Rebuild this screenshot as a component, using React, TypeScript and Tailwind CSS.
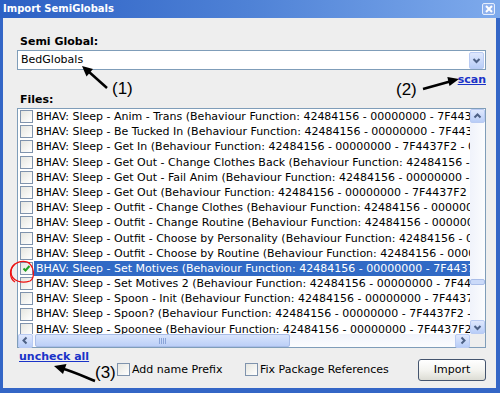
import React from "react";

const rows = [
  "BHAV: Sleep - Anim - Trans (Behaviour Function: 42484156 - 00000000 - 7F4437F2 - 00002001)",
  "BHAV: Sleep - Be Tucked In (Behaviour Function: 42484156 - 00000000 - 7F4437F2 - 00002002)",
  "BHAV: Sleep - Get In (Behaviour Function: 42484156 - 00000000 - 7F4437F2 - 00002003)",
  "BHAV: Sleep - Get Out - Change Clothes Back (Behaviour Function: 42484156 - 00000000 - 7F4437F2)",
  "BHAV: Sleep - Get Out - Fail Anim (Behaviour Function: 42484156 - 00000000 - 7F4437F2)",
  "BHAV: Sleep - Get Out (Behaviour Function: 42484156 - 00000000 - 7F4437F2 - 00002006)",
  "BHAV: Sleep - Outfit - Change Clothes (Behaviour Function: 42484156 - 00000000 - 7F4437F2)",
  "BHAV: Sleep - Outfit - Change Routine (Behaviour Function: 42484156 - 00000000 - 7F4437F2)",
  "BHAV: Sleep - Outfit - Choose by Personality (Behaviour Function: 42484156 - 00000000)",
  "BHAV: Sleep - Outfit - Choose by Routine (Behaviour Function: 42484156 - 00000000)",
  "BHAV: Sleep - Set Motives (Behaviour Function: 42484156 - 00000000 - 7F4437F2 - 0000200B)",
  "BHAV: Sleep - Set Motives 2 (Behaviour Function: 42484156 - 00000000 - 7F4437F2 - 0000200C)",
  "BHAV: Sleep - Spoon - Init (Behaviour Function: 42484156 - 00000000 - 7F4437F2 - 0000200D)",
  "BHAV: Sleep - Spoon? (Behaviour Function: 42484156 - 00000000 - 7F4437F2 - 0000200E)",
  "BHAV: Sleep - Spoonee (Behaviour Function: 42484156 - 00000000 - 7F4437F2 - 0000200F)",
];

const Chevron = ({ dir }: { dir: "up" | "down" | "left" | "right" }) => {
  const d = {
    up: "M2.5 6.5 L5.5 3.5 L8.5 6.5",
    down: "M2.5 4 L5.5 7 L8.5 4",
    left: "M6.5 2.5 L3.5 5.5 L6.5 8.5",
    right: "M4.5 2.5 L7.5 5.5 L4.5 8.5",
  }[dir];
  return (
    <svg width="11" height="11" viewBox="0 0 11 11">
      <path d={d} fill="none" stroke="#4d6185" strokeWidth="2" />
    </svg>
  );
};

const ScrollBtn = ({ dir }: { dir: "up" | "down" | "left" | "right" }) => (
  <div className="w-[15px] h-[14px] flex items-center justify-center rounded-[2px] border border-[#b9cbf3] bg-gradient-to-b from-[#dfe8fd] to-[#b8cdf7]">
    <Chevron dir={dir} />
  </div>
);

const Check = ({ checked }: { checked?: boolean }) => (
  <div className="w-[13px] h-[13px] shrink-0 border border-[#7f93ad] bg-gradient-to-br from-[#e6e6e0] to-white flex items-center justify-center">
    {checked && (
      <svg width="9" height="9" viewBox="0 0 9 9">
        <path d="M1.5 4.5 L3.5 6.5 L7.5 2" fill="none" stroke="#21a121" strokeWidth="2" />
      </svg>
    )}
  </div>
);

export default function App() {
  return (
    <div className="relative w-[500px] h-[393px] flex flex-col bg-[#3466c6] overflow-hidden font-['DejaVu_Sans',sans-serif] text-[11px] text-black">
      {/* Title bar */}
      <div className="h-[18px] shrink-0 flex items-center justify-between pl-[3px] pr-[5px] bg-gradient-to-r from-[#2c60c4] via-[#4f82d6] to-[#7eaaec]">
        <span className="text-white font-bold text-[10px] leading-none">Import SemiGlobals</span>
        <div className="w-[13px] h-[12px] flex items-center justify-center rounded-[2px] border border-[#e6eefc] bg-[#8fb2ee]">
          <svg width="8" height="8" viewBox="0 0 8 8">
            <path d="M1 1 L7 7 M7 1 L1 7" stroke="white" strokeWidth="2" />
          </svg>
        </div>
      </div>

      {/* Body */}
      <div className="flex-1 ml-[3px] mr-[4px] mb-[5px] bg-[#eeeeee] pl-[14px] pr-[10px] pt-[17px] flex flex-col">
        <div className="h-[14px] leading-[14px] font-bold pl-[3px]">Semi Global:</div>
        <div className="mt-[1px] h-[20px] flex items-center border border-[#7f9db9] bg-white">
          <span className="flex-1 pl-[3px] leading-[18px]">BedGlobals</span>
          <div className="w-[15px] h-[17px] mr-[1px] flex items-center justify-center rounded-[2px] border border-[#b9cbf3] bg-gradient-to-b from-[#dfe8fd] to-[#b8cdf7]">
            <Chevron dir="down" />
          </div>
        </div>
        <div className="mt-[3px] h-[14px] leading-[14px] flex justify-end">
          <span className="font-bold text-[#1a33c8] underline">scan</span>
        </div>
        <div className="mt-[6px] h-[14px] leading-[14px] font-bold pl-[3px]">Files:</div>

        {/* List */}
        <div className="mt-[1px] h-[240px] border border-[#7f9db9] bg-white flex flex-col">
          <div className="flex h-[225px]">
            <div className="w-[452px] overflow-hidden">
              {rows.map((r, i) => {
                const sel = i === 10;
                return (
                  <div key={i} className="h-[15.2px] flex items-center">
                    <div className="ml-[2px] mr-[1px]">
                      <Check checked={sel} />
                    </div>
                    <span
                      className={`h-full pl-[2px] flex-1 whitespace-nowrap leading-[15.2px] ${
                        sel ? "bg-[#316ac5] text-white" : ""
                      }`}
                    >
                      {r}
                    </span>
                  </div>
                );
              })}
            </div>
            <div className="w-[15px] flex flex-col bg-gradient-to-r from-[#f0f3fb] to-[#fbfcfe]">
              <ScrollBtn dir="up" />
              <div className="flex-1 flex flex-col">
                <div className="h-[156px]" />
                <div className="h-[6px] rounded-[2px] border border-[#a9bde8] bg-[#cbdaf9]" />
              </div>
              <ScrollBtn dir="down" />
            </div>
          </div>
          <div className="h-[13px] flex">
            <div className="w-[452px] flex items-center bg-gradient-to-b from-[#f0f3fb] to-[#fbfcfe]">
              <ScrollBtn dir="left" />
              <div className="ml-[2px] w-[255px] h-[13px] rounded-[2px] border border-[#a9bde8] bg-gradient-to-b from-[#d8e4fc] to-[#bccff7] flex items-center justify-center gap-[1px]">
                <div className="w-[1px] h-[6px] bg-[#8aa4d8]" />
                <div className="w-[1px] h-[6px] bg-[#8aa4d8]" />
                <div className="w-[1px] h-[6px] bg-[#8aa4d8]" />
                <div className="w-[1px] h-[6px] bg-[#8aa4d8]" />
              </div>
              <div className="flex-1" />
              <ScrollBtn dir="right" />
            </div>
            <div className="flex-1 bg-[#eeeeee]" />
          </div>
        </div>

        {/* Bottom row */}
        <div className="flex items-start h-[38px]">
          <div className="w-[100px] pl-[2px] mt-[2px] h-[14px] leading-[14px]">
            <span className="font-bold text-[#1a33c8] underline">uncheck all</span>
          </div>
          <div className="w-[128px] mt-[15px] flex items-center gap-[2px] h-[13px]">
            <Check />
            <span className="leading-[13px]">Add name Prefix</span>
          </div>
          <div className="mt-[15px] flex items-center gap-[2px] h-[13px]">
            <Check />
            <span className="leading-[13px]">Fix Package References</span>
          </div>
          <div className="ml-auto mt-[11px] w-[68px] h-[22px] flex items-center justify-center rounded-[3px] border border-[#44546e] bg-gradient-to-b from-white via-[#f4f4f0] to-[#dcdcd4]">
            Import
          </div>
        </div>
      </div>

      {/* Annotations */}
      <svg className="absolute inset-0 pointer-events-none" width="500" height="393" viewBox="0 0 500 393">
        <line x1="107" y1="88" x2="88" y2="71" stroke="black" strokeWidth="2.5" />
        <polygon points="82,66 93,69 86.5,76.5" fill="black" />
        <line x1="423" y1="89" x2="450" y2="81.5" stroke="black" strokeWidth="2.5" />
        <polygon points="459,79 449.5,86 447.3,77" fill="black" />
        <path d="M95 381 C 85 377, 72 371, 62 368.5" fill="none" stroke="black" strokeWidth="2.5" />
        <polygon points="54,366 66.5,364 63,374" fill="black" />
        <path
          d="M30 263 C 22 259, 11 263, 11 272 C 11 281, 22 284, 30 281 C 35 278, 35 266, 27 262"
          fill="none"
          stroke="#ee1111"
          strokeWidth="1.3"
        />
        <path d="M15 264 C 9 269, 9 278, 15 282" fill="none" stroke="#ee1111" strokeWidth="1.2" />
      </svg>
      <span className="absolute left-[112px] top-[80px] font-['Liberation_Sans',sans-serif] text-[17px] leading-[18px]">(1)</span>
      <span className="absolute left-[396px] top-[81px] font-['Liberation_Sans',sans-serif] text-[17px] leading-[18px]">(2)</span>
      <span className="absolute left-[95px] top-[364px] font-['Liberation_Sans',sans-serif] text-[17px] leading-[18px]">(3)</span>
    </div>
  );
}
